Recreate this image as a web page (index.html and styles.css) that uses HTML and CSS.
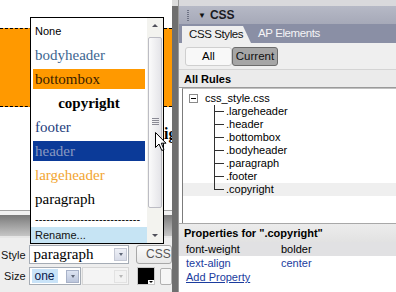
FILE: index.html
```html
<!DOCTYPE html>
<html>
<head>
<meta charset="utf-8">
<link rel="stylesheet" href="styles.css">
</head>
<body>
<div class="app">
  <div class="left">
    <div class="doc">
      <div class="band"></div>
      <div class="doc-text">ig</div>
    </div>
    <div class="pi-bar"></div>
    <div class="pi">
      <div class="pi-row">
        <span class="pi-label">Style</span>
        <div class="select style-sel"><span class="sel-text serif">paragraph</span><span class="arrow"></span></div>
        <div class="css-btn">CSS</div>
      </div>
      <div class="pi-row row2">
        <span class="pi-label">Size</span>
        <div class="select size-sel"><span class="sel-text hl">one</span><span class="arrow blue"></span></div>
        <div class="select dis-sel"><span class="arrow dis"></span></div>
        <div class="swatch"><span class="swatch-arrow"></span></div>
        <div class="mini-btn"></div>
      </div>
    </div>

    <div class="dropdown">
      <div class="list">
        <div class="item sans">None</div>
        <div class="item c-bodyheader">bodyheader</div>
        <div class="item c-bottombox">bottombox</div>
        <div class="item c-copyright">copyright</div>
        <div class="item c-footer">footer</div>
        <div class="item c-header">header</div>
        <div class="item c-largeheader">largeheader</div>
        <div class="item">paragraph</div>
        <div class="dashes">----------------------------</div>
        <div class="rename">Rename...</div>
      </div>
      <div class="scrollbar">
        <div class="sb-btn"><span class="tri-up"></span></div>
        <div class="sb-track">
          <div class="thumb"><span class="grip-lines"></span></div>
        </div>
        <div class="sb-btn"><span class="tri-down"></span></div>
      </div>
    </div>

    <svg class="cursor" width="13" height="20" viewBox="0 0 13 20">
      <path d="M0.5 0.5 L0.5 15.5 L4 12 L6.8 18.5 L9 17.5 L6.3 11.2 L11 11.2 Z" fill="#fff" stroke="#000" stroke-width="1"/>
    </svg>
  </div>
  <div class="splitter"></div>
  <div class="panel">
    <div class="panel-top"></div>
    <div class="title-bar"><span class="grip"></span><span class="tri">&#9660;</span><span class="title">CSS</span></div>
    <div class="tabs">
      <div class="tab active">CSS Styles</div>
      <div class="tab">AP Elements</div>
    </div>
    <div class="toolbar">
      <div class="tbtn">All</div>
      <div class="tbtn pressed">Current</div>
    </div>
    <div class="section-head">All Rules</div>
    <div class="tree">
      <div class="tree-root"><span class="minus"></span><span>css_style.css</span></div>
      <ul class="tree-children">
        <li>.largeheader</li>
        <li>.header</li>
        <li>.bottombox</li>
        <li>.bodyheader</li>
        <li>.paragraph</li>
        <li>.footer</li>
        <li class="sel last">.copyright</li>
      </ul>
    </div>
    <div class="props-head">Properties for ".copyright"</div>
    <div class="prop-row gray"><span class="k">font-weight</span><span class="v">bolder</span></div>
    <div class="prop-row blue"><span class="k">text-align</span><span class="v">center</span></div>
    <div class="prop-row"><a class="add">Add Property</a></div>
  </div>
</div>
</body>
</html>
```

FILE: styles.css
```css
html, body {
  margin: 0;
  padding: 0;
  width: 396px;
  height: 292px;
  overflow: hidden;
  font-family: "Liberation Sans", Arial, sans-serif;
  font-size: 11px;
  color: #000;
  background: #fff;
}

.app {
  display: flex;
  width: 396px;
  height: 292px;
}

/* ---------- left: document + property inspector ---------- */
.left {
  position: relative;
  width: 172px;
  flex: none;
  display: flex;
  flex-direction: column;
  overflow: hidden;
}

.doc {
  height: 210px;
  background: #fff;
  flex: none;
}

.band {
  margin-top: 28px;
  height: 77px;
  background: #ff9900;
  border-top: 1px dashed #000;
  border-bottom: 1px dashed #000;
}

.doc-text {
  margin-top: 18px;
  padding-left: 164px;
  width: 8px;
  overflow: hidden;
  font-family: "Liberation Serif", "Times New Roman", serif;
  font-weight: bold;
  font-size: 16px;
  line-height: 18px;
  white-space: nowrap;
}

.pi-bar {
  height: 28px;
  flex: none;
  background: linear-gradient(to bottom,
    #a4a4a4 0, #a4a4a4 1px,
    #f2f2f2 1px, #f2f2f2 5px,
    #7a7a7a 5px, #c6c6c6 26px,
    #e6e6e6 26px, #e6e6e6 28px);
}

.pi {
  flex: 1;
  background: #eeeeee;
  padding-top: 7px;
  display: flex;
  flex-direction: column;
  gap: 3px;
}

.pi-row {
  display: flex;
  align-items: center;
  height: 19px;
}

.pi-row.row2 {
  height: 18px;
}

.pi-label {
  width: 27px;
  padding-right: 3px;
  text-align: right;
  font-size: 11px;
  color: #111;
}

.select {
  display: flex;
  align-items: center;
  height: 100%;
  box-sizing: border-box;
  border: 1px solid #a5acb5;
  background: #fff;
}

.style-sel {
  width: 106px;
}

.size-sel {
  width: 55px;
}

.dis-sel {
  width: 50px;
  margin-left: 1px;
  background: #f4f4f4;
  border-color: #d6d6d6;
  justify-content: flex-end;
}

.sel-text {
  flex: 1;
  padding-left: 4px;
  white-space: nowrap;
}

.sel-text.serif {
  font-family: "Liberation Serif", "Times New Roman", serif;
  font-size: 15px;
}

.sel-text.hl {
  flex: none;
  margin-left: 2px;
  padding: 0 3px 0 3px;
  background: #c9e3f8;
  color: #0a1a4a;
  font-size: 12px;
  line-height: 14px;
}

.size-sel .arrow {
  margin-left: auto;
}

.arrow {
  width: 13px;
  height: 13px;
  margin-right: 1px;
  box-sizing: border-box;
  border: 1px solid #c4c8d4;
  background: linear-gradient(#eef0f6, #d8dce8);
  position: relative;
  flex: none;
}

.arrow::after {
  content: "";
  position: absolute;
  left: 4px;
  top: 4px;
  border-left: 2px solid transparent;
  border-right: 2px solid transparent;
  border-top: 3px solid #606878;
}

.arrow.blue {
  background: linear-gradient(#dde4f2, #bcc6dc);
  border-color: #a8b2c8;
}

.arrow.dis {
  background: #f2f2f2;
  border-color: #e2e2e2;
}

.arrow.dis::after {
  border-top-color: #b8b8b8;
}

.css-btn {
  margin-left: 7px;
  width: 36px;
  height: 19px;
  box-sizing: border-box;
  flex: none;
  border: 1px solid #a8a8a8;
  border-radius: 3px;
  background: linear-gradient(#fbfbfb, #e8e8e8);
  color: #555;
  font-size: 12px;
  line-height: 17px;
  padding-left: 9px;
}

.swatch {
  margin-left: 8px;
  width: 18px;
  height: 18px;
  box-sizing: border-box;
  flex: none;
  border: 1px solid #c8c8c8;
  background: #000;
  position: relative;
}

.swatch-arrow {
  position: absolute;
  right: 0;
  bottom: 0;
  width: 6px;
  height: 4px;
  background: #fff;
}

.swatch-arrow::after {
  content: "";
  position: absolute;
  left: 1px;
  top: 1px;
  border-left: 2px solid transparent;
  border-right: 2px solid transparent;
  border-top: 2px solid #000;
}

.mini-btn {
  margin-left: 5px;
  width: 12px;
  height: 17px;
  flex: none;
  box-sizing: border-box;
  border: 1px solid #b0b0b0;
  border-radius: 2px;
  background: #f6f6f6;
}

/* ---------- dropdown list (overlay) ---------- */
.dropdown {
  position: absolute;
  left: 30px;
  top: 17px;
  width: 134px;
  height: 227px;
  box-sizing: border-box;
  border: 1px solid #000;
  background: #fff;
  display: flex;
}

.list {
  flex: 1;
  display: flex;
  flex-direction: column;
  padding-top: 1px;
  min-width: 0;
}

.item {
  height: 20px;
  margin: 2px 2px;
  padding-left: 2px;
  line-height: 20px;
  font-family: "Liberation Serif", "Times New Roman", serif;
  font-size: 15px;
  white-space: nowrap;
  flex: none;
}

.item.sans {
  font-family: "Liberation Sans", Arial, sans-serif;
  font-size: 11px;
}

.c-bodyheader { color: #3d6690; }
.c-bottombox { background: #ff9900; color: #3a1e00; }
.c-copyright { font-weight: bold; text-align: center; padding-left: 0; }
.c-footer { color: #1d3c7c; }
.c-header { background: #0b3a98; color: #8898c0; }
.c-largeheader { color: #f2a531; }

.dashes {
  height: 16px;
  line-height: 16px;
  padding-left: 4px;
  font-size: 11px;
  letter-spacing: 0.1px;
  white-space: nowrap;
  overflow: hidden;
  flex: none;
}

.rename {
  height: 16px;
  line-height: 17px;
  padding-left: 4px;
  background: #c6e4f4;
  font-size: 11px;
  color: #111;
  flex: none;
}

.scrollbar {
  width: 16px;
  flex: none;
  display: flex;
  flex-direction: column;
  background: #f3f3ef;
}

.sb-btn {
  height: 16px;
  flex: none;
  position: relative;
}

.tri-up, .tri-down {
  position: absolute;
  left: 5px;
  width: 0;
  height: 0;
  border-left: 3px solid transparent;
  border-right: 3px solid transparent;
}

.tri-up {
  top: 6px;
  border-bottom: 3px solid #50505a;
}

.tri-down {
  top: 7px;
  border-top: 3px solid #50505a;
}

.sb-track {
  flex: 1;
  padding: 3px 1px 19px 1px;
  display: flex;
}

.thumb {
  flex: 1;
  box-sizing: border-box;
  border: 1px solid #bcbcc4;
  border-radius: 2px;
  background: linear-gradient(to right, #fbfbfb, #e4e4e8);
  position: relative;
}

.grip-lines {
  position: absolute;
  left: 3px;
  top: 80px;
  width: 7px;
  height: 7px;
  background: repeating-linear-gradient(to bottom, #8a8a94 0, #8a8a94 1px, transparent 1px, transparent 2px);
}

.cursor {
  position: absolute;
  left: 155px;
  top: 132px;
}

/* ---------- splitter ---------- */
.splitter {
  width: 6px;
  flex: none;
  background: linear-gradient(to bottom, #dcdcdc 0, #dcdcdc 6px, #6f6f6f 6px);
  border-right: 1px solid #9a9a9a;
}

/* ---------- right panel ---------- */
.panel {
  flex: 1;
  display: flex;
  flex-direction: column;
  background: #fff;
  min-width: 0;
}

.panel-top {
  height: 6px;
  background: #d9d9dc;
  flex: none;
}

.title-bar {
  height: 18px;
  flex: none;
  display: flex;
  align-items: center;
  background: linear-gradient(#b6b9c6, #a6a9b8);
  padding-left: 8px;
}

.grip {
  width: 2px;
  height: 11px;
  background: repeating-linear-gradient(to bottom, #6e7284 0, #6e7284 1px, transparent 1px, transparent 2px);
  margin-right: 9px;
}

.tri {
  font-size: 8px;
  color: #111;
  margin-right: 4px;
}

.title {
  font-weight: bold;
  font-size: 12px;
  color: #1a1a22;
}

.tabs {
  height: 19px;
  flex: none;
  display: flex;
  align-items: flex-end;
  background: #8a8fa5;
  padding-left: 3px;
}

.tab {
  height: 19px;
  line-height: 19px;
  font-size: 11.5px;
  letter-spacing: -0.4px;
  color: #f4f4f6;
  padding-left: 7px;
}

.tab.active {
  height: 17px;
  line-height: 17px;
  width: 62px;
  padding-left: 7px;
  background: #efefef;
  color: #111;
  clip-path: polygon(0 0, 61px 0, 100% 100%, 0 100%);
}

.toolbar {
  height: 26px;
  flex: none;
  box-sizing: border-box;
  background: #efefef;
  padding: 4px 0 0 6px;
  display: flex;
  align-items: flex-start;
}

.tbtn {
  width: 47px;
  height: 19px;
  box-sizing: border-box;
  border: 1px solid #cfcfcf;
  border-radius: 3px;
  background: #f8f8f8;
  text-align: center;
  line-height: 17px;
  font-size: 11.5px;
}

.tbtn.pressed {
  width: 46px;
  border-color: #6c6c6c;
  background: #a6a6a6;
  color: #111;
}

.section-head {
  height: 19px;
  flex: none;
  box-sizing: border-box;
  background: #ebebeb;
  border-top: 1px solid #d4d4d4;
  border-bottom: 1px solid #9a9a9a;
  font-weight: bold;
  padding-left: 5px;
  line-height: 18px;
}

.tree {
  height: 135px;
  flex: none;
  box-sizing: border-box;
  margin-left: 3px;
  border-left: 1px solid #7c7c7c;
  border-top: 1px solid #c0c0c0;
  padding-top: 3px;
  background: #fff;
}

.tree-root {
  height: 13px;
  line-height: 13px;
  display: flex;
  align-items: center;
  padding-left: 6px;
}

.minus {
  width: 9px;
  height: 9px;
  box-sizing: border-box;
  border: 1px solid #8a8a8a;
  position: relative;
  margin-right: 7px;
  flex: none;
}

.minus::after {
  content: "";
  position: absolute;
  left: 1px;
  top: 3px;
  width: 5px;
  height: 1px;
  background: #000;
}

.tree-children {
  list-style: none;
  margin: 0;
  padding: 0;
}

.tree-children li {
  position: relative;
  height: 13px;
  line-height: 13px;
  padding-left: 43px;
}

.tree-children li::before {
  content: "";
  position: absolute;
  left: 31px;
  top: 0;
  width: 1px;
  height: 13px;
  background: #303030;
}

.tree-children li.last::before {
  height: 7px;
}

.tree-children li::after {
  content: "";
  position: absolute;
  left: 31px;
  top: 6px;
  width: 10px;
  height: 1px;
  background: #303030;
}

.tree-children li.sel {
  background: #efefef;
}

.props-head {
  height: 19px;
  flex: none;
  box-sizing: border-box;
  border-top: 1px solid #a8a8a8;
  background: linear-gradient(#ececec, #e2e2e2);
  font-weight: bold;
  padding-left: 5px;
  line-height: 18px;
}

.prop-row {
  height: 14px;
  flex: none;
  display: flex;
  line-height: 14px;
  padding-left: 7px;
}

.prop-row.gray {
  background: #e1e1e3;
}

.prop-row.blue {
  color: #1b3c9e;
}

.prop-row .k {
  width: 95px;
}

.add {
  color: #1b3c9e;
  text-decoration: underline;
}
```
